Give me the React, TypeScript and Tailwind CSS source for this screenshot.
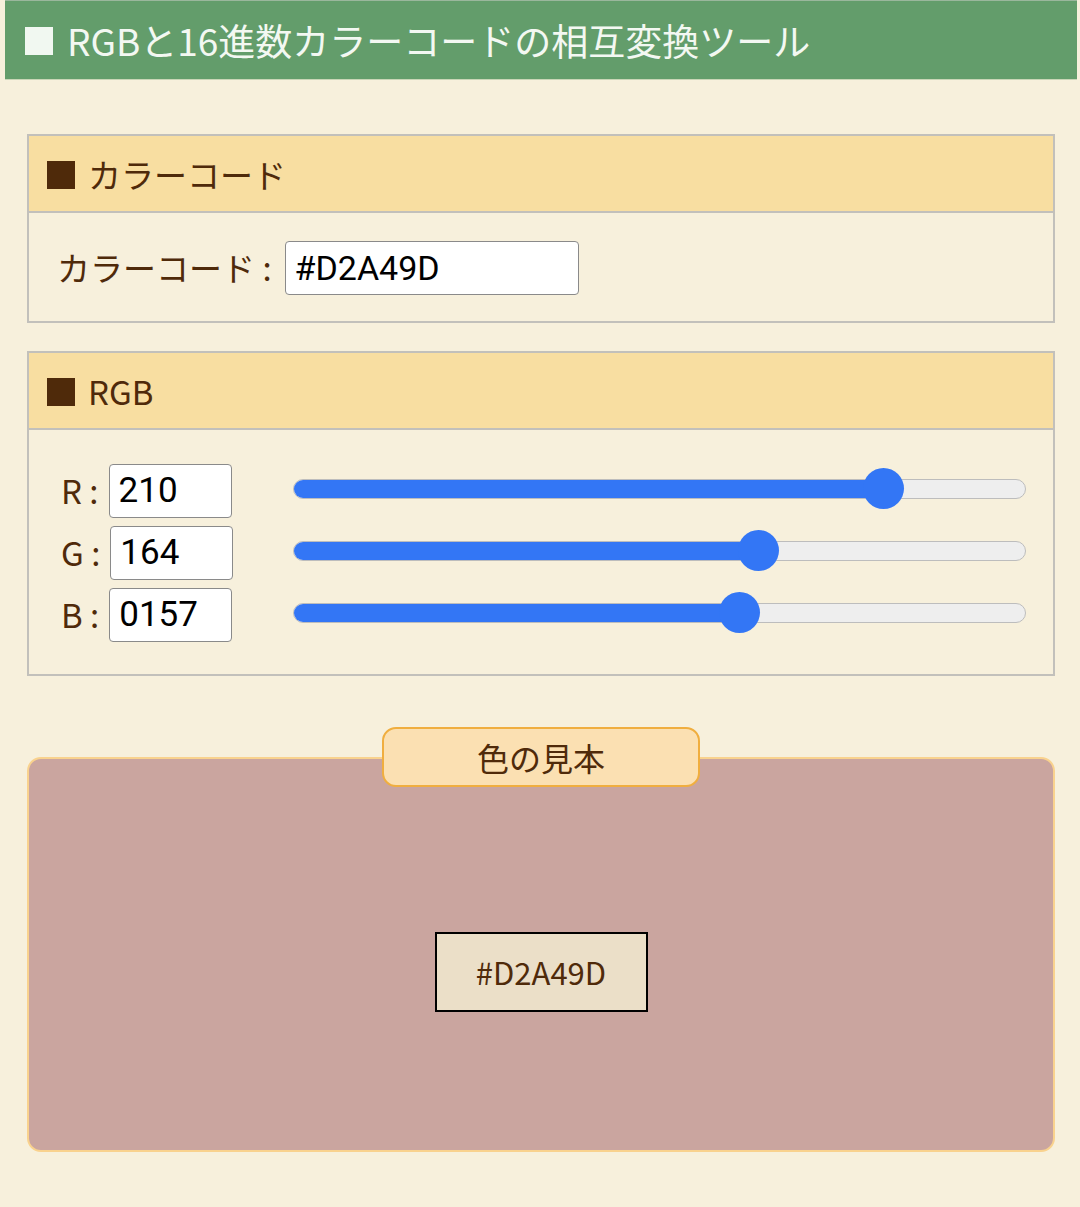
const FONT = "font-['Noto_Sans_CJK_JP','Noto_Sans',sans-serif]";

const channels = [
  { label: 'R', value: '210', num: 210 },
  { label: 'G', value: '164', num: 164 },
  { label: 'B', value: '0157', num: 157 },
];

function SectionHead({ title }: { title: string }) {
  return (
    <div className="h-[77px] bg-[#f8dea1] border-b-2 border-[#c2c0bb] flex items-center pl-[18px] pt-[2px]">
      <span className="inline-block w-[28px] h-[28px] bg-[#4f2a0a]" />
      <span className="ml-[13px] text-[33px] text-[#4f2a0a]">{title}</span>
    </div>
  );
}

function Slider({ num }: { num: number }) {
  const pct = num / 255;
  return (
    <div className="relative w-[733px] h-[41px] flex items-center">
      <div className="w-full h-[20px] rounded-full bg-[#eeeeee] border border-[#bdbdbd] overflow-hidden">
        <div className="h-full bg-[#3376f5]" style={{ width: `calc(20px + ${pct} * 693px)` }} />
      </div>
      <div
        className="absolute top-0 w-[41px] h-[41px] rounded-full bg-[#3376f5]"
        style={{ left: `calc(${pct} * 693px - 1px)` }}
      />
    </div>
  );
}

export default function App() {
  return (
    <div className={`min-h-screen bg-[#f7f0dc] ${FONT}`}>
      <div className="w-[1072px] ml-[5px] pb-[55px]">
        <div className="h-[80px] bg-[#639d6b] border-t border-[#9ab79c] border-b border-b-[#c9d6b7] flex items-center pl-[20px] pt-[1px]">
          <span className="inline-block w-[28px] h-[28px] bg-[#f1f8f1]" />
          <span className="ml-[14px] text-[37px] text-[#f3f8f2]">RGBと16進数カラーコードの相互変換ツール</span>
        </div>

        <div className="mx-[22px]">
          <div className="mt-[54px] border-2 border-[#c2c0bb]">
            <SectionHead title="カラーコード" />
            <div className="h-[108px] flex items-center pl-[28px] pt-[2px]">
              <span className="text-[33px] text-[#4f2a0a]">カラーコード :</span>
              <div className="ml-[13px] w-[294px] h-[54px] bg-white border border-[#8a8a8a] rounded-[4px] flex items-center pl-[9px]">
                <span className="text-[34px] text-black font-['Roboto',sans-serif]">#D2A49D</span>
              </div>
            </div>
          </div>

          <div className="mt-[28px] border-2 border-[#c2c0bb]">
            <SectionHead title="RGB" />
            <div className="h-[244px] pt-[34px] pl-[32px] flex flex-col gap-[8px]">
              {channels.map(c => (
                <div key={c.label} className="h-[54px] flex items-center">
                  <div className="w-[232px] flex items-center">
                    <span className="text-[33px] text-[#4f2a0a]">{c.label} :</span>
                    <div className="ml-[10px] w-[123px] h-[54px] bg-white border border-[#8a8a8a] rounded-[4px] flex items-center pl-[9px]">
                      <span className="text-[35px] text-black font-['Roboto',sans-serif]">{c.value}</span>
                    </div>
                  </div>
                  <div className="-mt-[5px]">
                    <Slider num={c.num} />
                  </div>
                </div>
              ))}
            </div>
          </div>

          <div className="mt-[51px] flex flex-col items-center">
            <div className="relative z-10 w-[318px] h-[60px] bg-[#fbe0b2] border-2 border-[#f0ae3f] rounded-[14px] flex items-center justify-center">
              <span className="text-[32px] text-[#4f2a0a]">色の見本</span>
            </div>
            <div className="-mt-[30px] w-full h-[395px] bg-[#caa59f] border-2 border-[#f9d28e] rounded-[14px] flex items-center justify-center pt-[35px]">
              <div className="w-[213px] h-[80px] bg-[#ebdfc8] border-2 border-black flex items-center justify-center">
                <span className="text-[31px] text-[#4f2a0a]">#D2A49D</span>
              </div>
            </div>
          </div>
        </div>
      </div>
    </div>
  );
}
